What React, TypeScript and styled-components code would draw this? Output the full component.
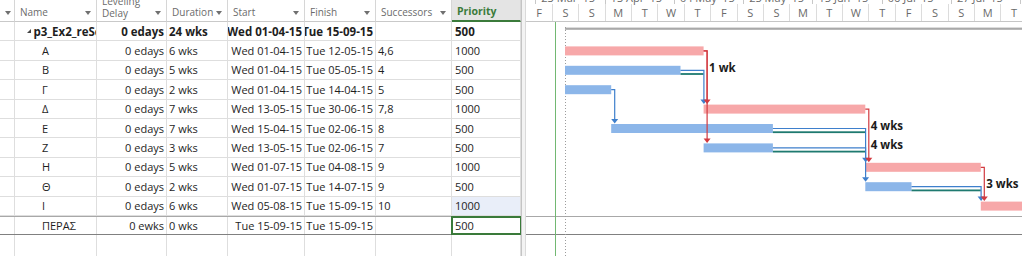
import React from "react";
import styled, { createGlobalStyle } from "styled-components";

const ROW_H = 19.4;
const DAY_PX = 3.3;
const ORIGIN = 39; // gantt x of Wed 01-04-15 (day 0)
const BAR_H = 9;
const COLS = "15px 82px 70px 61px 77px 71px 76px 69px";
const GANTT_W = 496;
const BODY_H = 234;

const DAYS = ["M", "T", "W", "T", "F", "S", "S"];
const MONTHS = ["Jan", "Feb", "Mar", "Apr", "May", "Jun", "Jul", "Aug", "Sep", "Oct", "Nov", "Dec"];

const dayX = (d: number) => ORIGIN + d * DAY_PX;
const dayLetter = (d: number) => DAYS[(((2 + d) % 7) + 7) % 7];
const dateLabel = (d: number) => {
  const dt = new Date(2015, 3, 1 + d);
  return `${String(dt.getDate()).padStart(2, "0")} ${MONTHS[dt.getMonth()]} '${String(dt.getFullYear()).slice(2)}`;
};

interface Task {
  name: string;
  delay: string;
  duration: string;
  start: string;
  finish: string;
  successors: string;
  priority: string;
  from: number;
  to: number;
  critical?: boolean;
  slack?: number;
  slackLabel?: string;
}

const tasks: Task[] = [
  { name: "A", delay: "0 edays", duration: "6 wks", start: "Wed 01-04-15", finish: "Tue 12-05-15", successors: "4,6", priority: "1000", from: 0, to: 42, critical: true },
  { name: "B", delay: "0 edays", duration: "5 wks", start: "Wed 01-04-15", finish: "Tue 05-05-15", successors: "4", priority: "500", from: 0, to: 35, slack: 7, slackLabel: "1 wk" },
  { name: "Γ", delay: "0 edays", duration: "2 wks", start: "Wed 01-04-15", finish: "Tue 14-04-15", successors: "5", priority: "500", from: 0, to: 14 },
  { name: "Δ", delay: "0 edays", duration: "7 wks", start: "Wed 13-05-15", finish: "Tue 30-06-15", successors: "7,8", priority: "1000", from: 42, to: 91, critical: true },
  { name: "E", delay: "0 edays", duration: "7 wks", start: "Wed 15-04-15", finish: "Tue 02-06-15", successors: "8", priority: "500", from: 14, to: 63, slack: 28, slackLabel: "4 wks" },
  { name: "Z", delay: "0 edays", duration: "3 wks", start: "Wed 13-05-15", finish: "Tue 02-06-15", successors: "7", priority: "500", from: 42, to: 63, slack: 28, slackLabel: "4 wks" },
  { name: "H", delay: "0 edays", duration: "5 wks", start: "Wed 01-07-15", finish: "Tue 04-08-15", successors: "9", priority: "1000", from: 91, to: 126, critical: true },
  { name: "Θ", delay: "0 edays", duration: "2 wks", start: "Wed 01-07-15", finish: "Tue 14-07-15", successors: "9", priority: "500", from: 91, to: 105, slack: 21, slackLabel: "3 wks" },
  { name: "I", delay: "0 edays", duration: "6 wks", start: "Wed 05-08-15", finish: "Tue 15-09-15", successors: "10", priority: "1000", from: 126, to: 168, critical: true },
  { name: "ΠΕΡΑΣ", delay: "0 ewks", duration: "0 wks", start: "Tue 15-09-15", finish: "Tue 15-09-15", successors: "", priority: "500", from: 168, to: 168 },
];

// links drawn in the chart (pred index, succ index)
const links: [number, number][] = [
  [1, 3], [2, 4], [4, 7], [5, 6], [7, 8],
  [0, 3], [0, 5], [3, 6], [6, 8],
];

const GlobalStyle = createGlobalStyle`
  html, body { margin: 0; padding: 0; background: #fff; }
  body { font-family: "Segoe UI", "Open Sans", sans-serif; }
`;

const Screen = styled.div`
  display: flex;
  width: 1022px;
  height: 256px;
  overflow: hidden;
  background: #fff;
  font-size: 11px;
  color: #1e1e1e;
`;

const TablePane = styled.div`
  flex: none;
  width: 521px;
  display: flex;
  flex-direction: column;
  overflow: hidden;
`;

const Divider = styled.div`
  flex: none;
  width: 5px;
  box-sizing: border-box;
  background: #f3f3f3;
  border-left: 1px solid #c4c4c4;
  border-right: 1px solid #dadada;
`;

const GanttPane = styled.div`
  flex: 1;
  min-width: 0;
  display: flex;
  flex-direction: column;
  overflow: hidden;
`;

const HeadRow = styled.div`
  display: grid;
  grid-template-columns: ${COLS};
  height: 22px;
  flex: none;
`;

const HeadCell = styled.div<{ $active?: boolean }>`
  display: flex;
  align-items: flex-end;
  box-sizing: border-box;
  height: 22px;
  padding: 0 0 2px 5px;
  border-right: 1px solid #d6d6d6;
  border-bottom: ${(p) => (p.$active ? "2px solid #3b7b3b" : "1px solid #c9c9c9")};
  background: ${(p) => (p.$active ? "#e4e4e4" : "#fff")};
  color: ${(p) => (p.$active ? "#3b7b3b" : "#6b6b6b")};
  font-size: ${(p) => (p.$active ? "10.5px" : "10px")};
  font-weight: ${(p) => (p.$active ? 700 : 400)};
  line-height: 13px;
  white-space: nowrap;
  overflow: hidden;
`;

const HeadLabel = styled.span<{ $stacked?: boolean }>`
  display: block;
  line-height: ${(p) => (p.$stacked ? "12px" : "13px")};
  white-space: ${(p) => (p.$stacked ? "normal" : "nowrap")};
`;

const Caret = styled.span`
  flex: none;
  width: 0;
  height: 0;
  margin: 0 5px 4px auto;
  border-left: 3.5px solid transparent;
  border-right: 3.5px solid transparent;
  border-top: 4px solid #707070;
`;

const Row = styled.div<{ $marked?: boolean; $summary?: boolean }>`
  display: grid;
  grid-template-columns: ${COLS};
  height: ${ROW_H}px;
  flex: none;
  box-sizing: border-box;
  font-size: ${(p) => (p.$summary ? "11.5px" : "11px")};
  border-top: ${(p) => (p.$marked ? "1px solid #a8a8a8" : "none")};
  border-bottom: 1px solid ${(p) => (p.$marked ? "#808080" : "#dedede")};
`;

const FillRow = styled(Row)`
  flex: 1;
  border-bottom: none;
`;

const Cell = styled.div<{ $right?: boolean; $bold?: boolean; $indent?: number; $tone?: "selected" | "active" }>`
  display: flex;
  align-items: center;
  justify-content: ${(p) => (p.$right ? "flex-end" : "flex-start")};
  box-sizing: border-box;
  padding: 0 ${(p) => (p.$right ? 2 : 0)}px 0 ${(p) => p.$indent ?? 2}px;
  border-right: 1px solid #dedede;
  overflow: hidden;
  white-space: nowrap;
  font-weight: ${(p) => (p.$bold ? 700 : 400)};
  background: ${(p) => (p.$tone === "selected" ? "#e9eef9" : "transparent")};
  outline: ${(p) => (p.$tone === "active" ? "2px solid #3a7a3a" : "none")};
  outline-offset: -1px;
`;

const Collapse = styled.span`
  flex: none;
  width: 0;
  height: 0;
  margin: 0 3px 1px 0;
  border-left: 4.5px solid transparent;
  border-bottom: 4.5px solid #444;
`;

const GanttHeader = styled.div`
  flex: none;
  height: 22px;
  box-sizing: border-box;
  border-bottom: 1px solid #c6c6c6;
  display: flex;
  flex-direction: column;
  justify-content: flex-end;
  overflow: hidden;
`;

const Tier = styled.div<{ $h: number; $offset: number }>`
  flex: none;
  display: flex;
  height: ${(p) => p.$h}px;
  margin-left: ${(p) => p.$offset}px;
`;

const TierCell = styled.div<{ $w: number; $major?: boolean }>`
  flex: none;
  width: ${(p) => p.$w}px;
  box-sizing: border-box;
  display: flex;
  align-items: center;
  justify-content: ${(p) => (p.$major ? "flex-start" : "center")};
  padding-left: ${(p) => (p.$major ? 5 : 0)}px;
  border-left: 1px solid ${(p) => (p.$major ? "#c8c8c8" : "#dcdcdc")};
  color: #6a6a6a;
  font-size: 11px;
  line-height: 11px;
  white-space: nowrap;
`;

const GanttBody = styled.div`
  flex: 1;
  position: relative;
  display: flex;
  flex-direction: column;
`;

const GanttRow = styled.div<{ $marked?: boolean }>`
  flex: none;
  height: ${ROW_H}px;
  box-sizing: border-box;
  border-top: ${(p) => (p.$marked ? "1px solid #a8a8a8" : "none")};
  border-bottom: ${(p) => (p.$marked ? "1px solid #808080" : "none")};
`;

const Chart = styled.svg`
  position: absolute;
  top: 0;
  left: 0;
  overflow: visible;
`;

const BarLabel = styled.text`
  font-family: "Segoe UI", "Open Sans", sans-serif;
  font-size: 11.5px;
  font-weight: 700;
  fill: #1b1b1b;
`;

const barTop = (k: number) => (k + 1) * ROW_H + 5;

const GanttChart: React.FC = () => (
  <Chart width={GANTT_W} height={BODY_H}>
    <line x1={29.5} y1={0} x2={29.5} y2={BODY_H} stroke="#72b872" strokeWidth={1} />
    <line x1={39.5} y1={5} x2={39.5} y2={BODY_H} stroke="#9c9c9c" strokeWidth={1} strokeDasharray="1 2" />
    <rect x={39} y={5.6} width={GANTT_W} height={2.2} fill="#a9a9a9" />
    {tasks.map((t, k) =>
      t.to > t.from ? (
        <rect key={`bar-${k}`} x={dayX(t.from)} y={barTop(k)} width={dayX(t.to) - dayX(t.from)} height={BAR_H} fill={t.critical ? "#f7a8a9" : "#8cb6e9"} />
      ) : null
    )}
    {tasks.map((t, k) =>
      t.slack ? (
        <rect key={`slack-${k}`} x={dayX(t.to)} y={barTop(k) + 7.3} width={t.slack * DAY_PX} height={1.8} fill="#1f7a70" />
      ) : null
    )}
    {links.map(([p, s]) => {
      const P = tasks[p];
      const S = tasks[s];
      const x0 = dayX(P.to);
      const y0 = barTop(p) + 4.5;
      const sx = dayX(S.from);
      const vx = sx - x0 > 5 ? sx + 0.3 : x0 + 3.5;
      const y1 = barTop(s) - 0.5;
      const color = P.critical ? "#d23a40" : "#3e7fcc";
      return (
        <g key={`link-${p}-${s}`}>
          <path d={`M${x0} ${y0} H${vx} V${y1 - 4}`} fill="none" stroke={color} strokeWidth={1.2} />
          <polygon points={`${vx - 3.5},${y1 - 4.5} ${vx + 3.5},${y1 - 4.5} ${vx},${y1}`} fill={color} />
        </g>
      );
    })}
    {tasks.map((t, k) =>
      t.slackLabel ? (
        <BarLabel key={`lbl-${k}`} x={dayX(t.to + (t.slack ?? 0)) + 5.5} y={(k + 1) * ROW_H + 11}>
          {t.slackLabel}
        </BarLabel>
      ) : null
    )}
  </Chart>
);

const headers = [
  { label: "", caret: true },
  { label: "Name", caret: true },
  { label: "Leveling Delay", caret: true, stacked: true },
  { label: "Duration", caret: true },
  { label: "Start", caret: true },
  { label: "Finish", caret: true },
  { label: "Successors", caret: true },
  { label: "Priority", caret: false, active: true },
];

const minorCells = Array.from({ length: 20 }, (_, k) => -12 + 8 * k);
const majorCells = Array.from({ length: 9 }, (_, k) => -30 + 21 * k);

const App: React.FC = () => {
  return (
    <>
      <GlobalStyle />
      <Screen>
        <TablePane>
          <HeadRow>
            {headers.map((h, i) => (
              <HeadCell key={i} $active={h.active}>
                {h.stacked ? (
                  <HeadLabel $stacked>
                    Leveling
                    <br />
                    Delay
                  </HeadLabel>
                ) : (
                  h.label && <HeadLabel>{h.label}</HeadLabel>
                )}
                {h.caret && <Caret />}
              </HeadCell>
            ))}
          </HeadRow>

          <Row $summary>
            <Cell />
            <Cell $bold $indent={11.5}>
              <Collapse />
              p3_Ex2_reSchedule
            </Cell>
            <Cell $right $bold>0 edays</Cell>
            <Cell $bold>24 wks</Cell>
            <Cell $right $bold>Wed 01-04-15</Cell>
            <Cell $right $bold>Tue 15-09-15</Cell>
            <Cell />
            <Cell $bold $indent={3}>500</Cell>
          </Row>

          {tasks.map((t, k) => (
            <Row key={t.name} $marked={k === tasks.length - 1}>
              <Cell />
              <Cell $indent={27}>{t.name}</Cell>
              <Cell $right>{t.delay}</Cell>
              <Cell>{t.duration}</Cell>
              <Cell $right>{t.start}</Cell>
              <Cell $right>{t.finish}</Cell>
              <Cell>{t.successors}</Cell>
              <Cell $indent={3} $tone={k === 8 ? "selected" : k === 9 ? "active" : undefined}>
                {t.priority}
              </Cell>
            </Row>
          ))}

          <FillRow>
            {headers.map((_, i) => (
              <Cell key={i} />
            ))}
          </FillRow>
        </TablePane>

        <Divider />

        <GanttPane>
          <GanttHeader>
            <Tier $h={13} $offset={dayX(-30)}>
              {majorCells.map((d) => (
                <TierCell key={d} $major $w={21 * DAY_PX}>
                  {dateLabel(d)}
                </TierCell>
              ))}
            </Tier>
            <Tier $h={17} $offset={dayX(-12)}>
              {minorCells.map((d) => (
                <TierCell key={d} $w={8 * DAY_PX}>
                  {dayLetter(d)}
                </TierCell>
              ))}
            </Tier>
          </GanttHeader>
          <GanttBody>
            <GanttRow />
            {tasks.map((t, k) => (
              <GanttRow key={t.name} $marked={k === tasks.length - 1} />
            ))}
            <GanttChart />
          </GanttBody>
        </GanttPane>
      </Screen>
    </>
  );
};

export default App;
